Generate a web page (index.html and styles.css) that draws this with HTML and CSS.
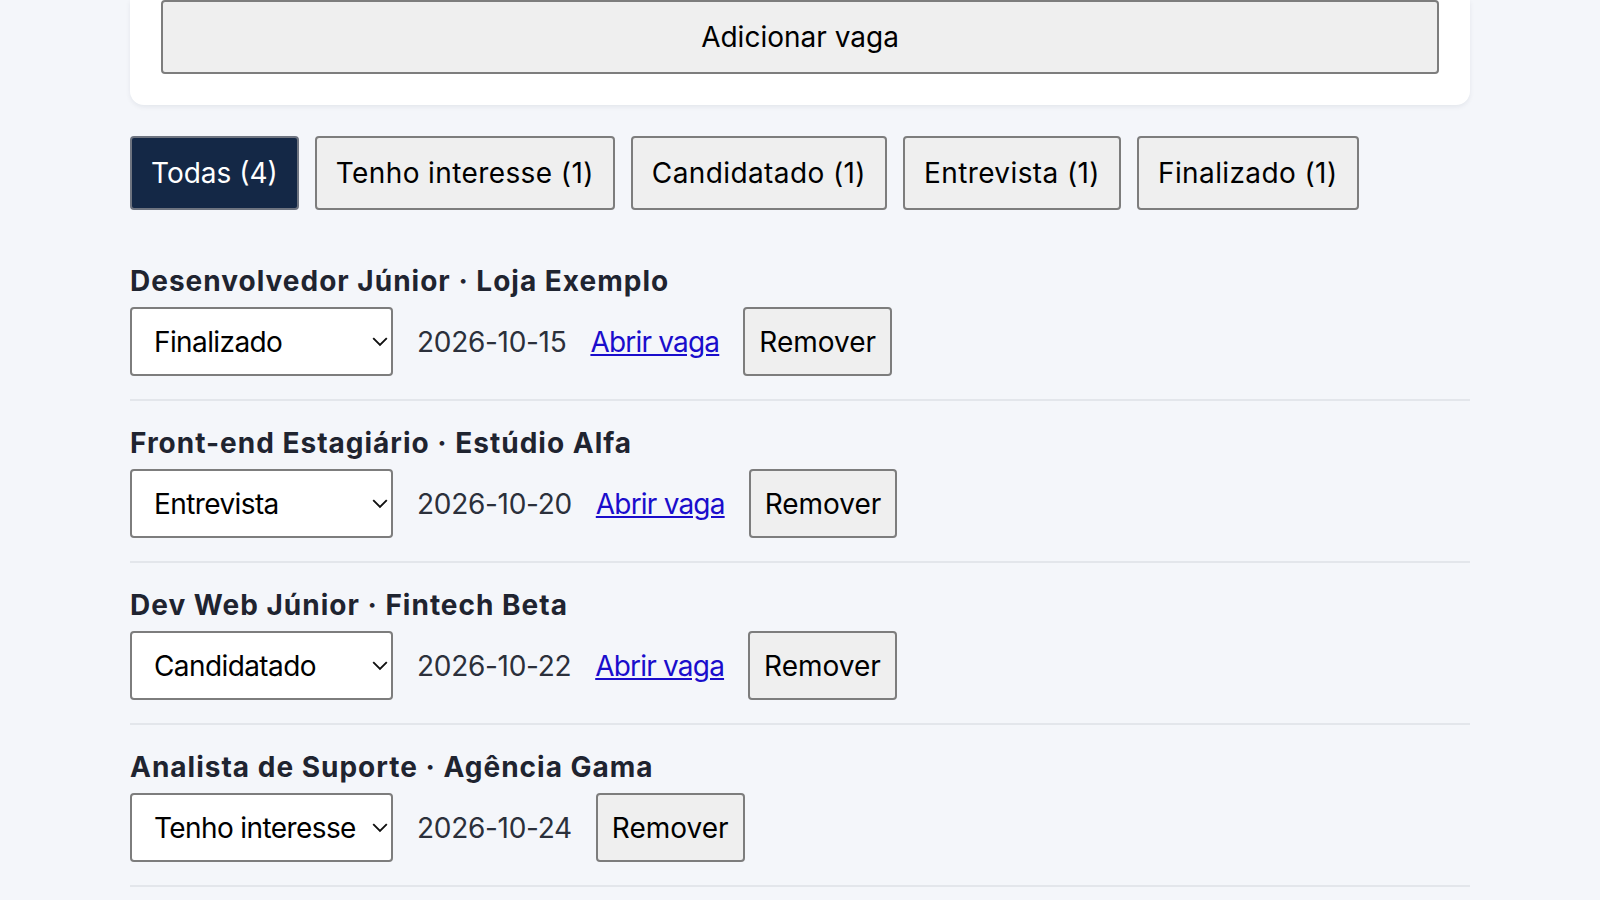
FILE: index.html
```html
<!DOCTYPE html>
<html lang="pt-BR">
  <head>
    <meta charset="UTF-8" />
    <meta name="viewport" content="width=device-width, initial-scale=1.0" />
    <title>Vagas</title>
    <link rel="stylesheet" href="styles.css">
  </head>
  <body>
    <div class="container">
      <div class="formCard">
        <button class="addBtn">Adicionar vaga</button>
      </div>

      <div class="filters">
        <button class="filterBtn active">Todas (4)</button>
        <button class="filterBtn">Tenho interesse (1)</button>
        <button class="filterBtn">Candidatado (1)</button>
        <button class="filterBtn">Entrevista (1)</button>
        <button class="filterBtn">Finalizado (1)</button>
      </div>

      <ul class="jobList">
        <li class="job">
          <h3>Desenvolvedor Júnior · Loja Exemplo</h3>
          <div class="jobRow">
            <select class="status">
              <option>Tenho interesse</option>
              <option>Candidatado</option>
              <option>Entrevista</option>
              <option selected>Finalizado</option>
            </select>
            <span class="date">2026-10-15</span>
            <a href="#">Abrir vaga</a>
            <button class="removeBtn">Remover</button>
          </div>
        </li>
        <li class="job">
          <h3>Front-end Estagiário · Estúdio Alfa</h3>
          <div class="jobRow">
            <select class="status">
              <option>Tenho interesse</option>
              <option>Candidatado</option>
              <option selected>Entrevista</option>
              <option>Finalizado</option>
            </select>
            <span class="date">2026-10-20</span>
            <a href="#">Abrir vaga</a>
            <button class="removeBtn">Remover</button>
          </div>
        </li>
        <li class="job">
          <h3>Dev Web Júnior · Fintech Beta</h3>
          <div class="jobRow">
            <select class="status">
              <option>Tenho interesse</option>
              <option selected>Candidatado</option>
              <option>Entrevista</option>
              <option>Finalizado</option>
            </select>
            <span class="date">2026-10-22</span>
            <a href="#">Abrir vaga</a>
            <button class="removeBtn">Remover</button>
          </div>
        </li>
        <li class="job">
          <h3>Analista de Suporte · Agência Gama</h3>
          <div class="jobRow">
            <select class="status">
              <option selected>Tenho interesse</option>
              <option>Candidatado</option>
              <option>Entrevista</option>
              <option>Finalizado</option>
            </select>
            <span class="date">2026-10-24</span>
            <button class="removeBtn">Remover</button>
          </div>
        </li>
      </ul>
    </div>
  </body>
</html>
```

FILE: styles.css
```css
body {
  margin: 0;
  background-color: #f4f6fa;
  color: #1f2430;
  font-family: Inter, "Noto Sans", sans-serif;
  font-size: 28px;
}

.container {
  width: 1340px;
  margin: 0 auto;
}

.formCard {
  background-color: #fff;
  border-radius: 0 0 14px 14px;
  padding: 0 31px 31px;
  box-shadow: 0 2px 5px rgba(20, 30, 50, 0.07);
}

button {
  font-family: inherit;
  font-size: 28px;
  line-height: 34px;
  color: #000;
  background-color: #efefef;
  border: 2px solid #7d7d7d;
  border-radius: 4px;
  cursor: pointer;
}

.addBtn {
  display: block;
  width: 100%;
  height: 74px;
}

.filters {
  display: flex;
  gap: 16px;
  margin-top: 31px;
}

.filterBtn {
  padding: 18px 19px;
  letter-spacing: 0.4px;
}

.filterBtn.active {
  background-color: #142846;
  border-color: #6e7480;
  color: #fff;
  letter-spacing: 0;
}

.jobList {
  list-style: none;
  margin: 29px 0 0;
  padding: 0;
}

.job {
  padding: 25px 0 23px;
  border-bottom: 2px solid #e3e6eb;
}

.job h3 {
  margin: 0 0 9px;
  font-size: 28px;
  line-height: 34px;
  font-weight: 700;
  letter-spacing: 1px;
}

.jobRow {
  display: flex;
  align-items: center;
  gap: 24px;
}

.status {
  appearance: none;
  width: 263px;
  height: 69px;
  padding: 0 30px 0 22px;
  font-family: inherit;
  font-size: 28px;
  letter-spacing: -0.6px;
  color: #000;
  background-color: #fff;
  background-image: url("data:image/svg+xml,%3Csvg xmlns='http://www.w3.org/2000/svg' width='16' height='10' viewBox='0 0 16 10'%3E%3Cpath d='M1.2 1.2l6.8 6.8 6.8-6.8' fill='none' stroke='%23111' stroke-width='1.9'/%3E%3C/svg%3E");
  background-repeat: no-repeat;
  background-position: right 3px center;
  border: 2px solid #7d7d7d;
  border-radius: 4px;
}

.date {
  color: #2b303b;
  letter-spacing: -0.3px;
}

a {
  color: #1a0dcc;
  letter-spacing: -0.8px;
}

.removeBtn {
  height: 69px;
  padding: 0 14px;
}
```
